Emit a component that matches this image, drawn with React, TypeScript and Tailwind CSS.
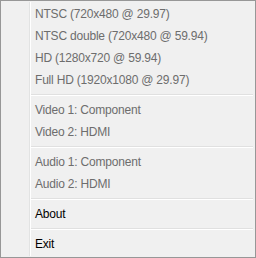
type Entry = { label: string; disabled?: boolean } | "sep";

const entries: Entry[] = [
  { label: "NTSC (720x480 @ 29.97)", disabled: true },
  { label: "NTSC double (720x480 @ 59.94)", disabled: true },
  { label: "HD (1280x720 @ 59.94)", disabled: true },
  { label: "Full HD (1920x1080 @ 29.97)", disabled: true },
  "sep",
  { label: "Video 1: Component", disabled: true },
  { label: "Video 2: HDMI", disabled: true },
  "sep",
  { label: "Audio 1: Component", disabled: true },
  { label: "Audio 2: HDMI", disabled: true },
  "sep",
  { label: "About" },
  "sep",
  { label: "Exit" },
];

export default function App() {
  return (
    <div className="w-[256px] h-[258px] bg-white">
      <div
        className="relative w-[256px] h-[258px] border border-[#979797] bg-[#f0f0f0] p-[2px] text-[12px] tracking-[-0.2px]"
        style={{ fontFamily: '"Liberation Sans", Arial, sans-serif' }}
      >
        {/* gutter line */}
        <div className="absolute top-[1px] bottom-[1px] left-[28px] w-[2px] border-l border-[#e2e3e3] bg-white" />
        <div className="relative flex flex-col">
          {entries.map((e, i) =>
            e === "sep" ? (
              <div key={i} className="h-[8px] flex flex-col justify-center pl-[28px]">
                <div className="h-[2px] border-t border-[#e0e0e0] bg-white" />
              </div>
            ) : (
              <div
                key={i}
                className={`h-[22px] flex items-center pl-[32px] whitespace-nowrap ${
                  e.disabled ? "text-[#6d6d6d]" : "text-black"
                }`}
              >
                {e.label}
              </div>
            )
          )}
        </div>
      </div>
    </div>
  );
}
